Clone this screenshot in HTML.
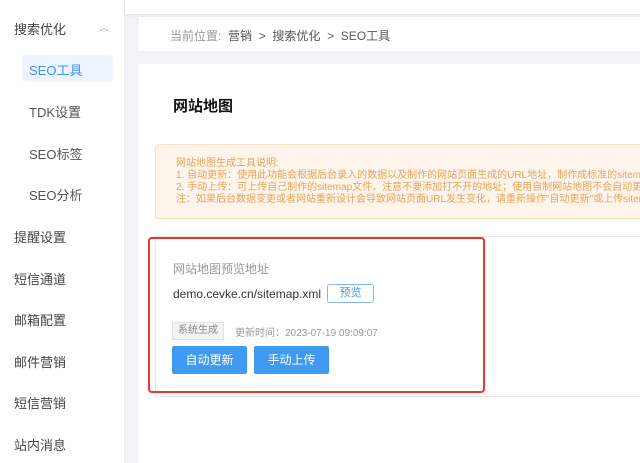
<!DOCTYPE html>
<html><head><meta charset="utf-8"><style>
*{margin:0;padding:0;box-sizing:border-box}
body{width:640px;height:463px;overflow:hidden;background:#f2f3f5;font-family:"Liberation Sans","Noto Sans CJK SC",sans-serif;position:relative}
.top{position:absolute;left:0;top:0;width:640px;height:14px;background:#fff;box-shadow:0 2px 5px rgba(0,0,0,.06)}
.side{position:absolute;left:0;top:0;width:125px;height:463px;background:#fff;border-right:1px solid #eceef1}
.it{position:absolute;font-size:13px;color:#444}
.sub{left:29px;color:#555}
.act{position:absolute;left:22px;top:55px;width:91px;height:27px;background:#edf4fe;border-radius:4px}
.bc{position:absolute;left:139px;top:17px;width:501px;height:34px;background:#fff;font-size:12px;color:#999;padding:10px 0 0 31px}
.bc b{font-weight:normal;color:#555}
.main{position:absolute;left:139px;top:64px;width:501px;height:399px;background:#fff}
h1{position:absolute;left:173px;top:95px;font-size:15px;font-weight:bold;color:#111}
.note{position:absolute;left:155px;top:144px;width:490px;height:75px;background:#fdf5eb;border:1px solid #f8e2c6;border-radius:3px;font-size:10px;line-height:12px;color:#e8a35a;padding:13px 0 0 20px;white-space:nowrap;overflow:hidden}
.card{position:absolute;left:155px;top:236px;width:490px;height:161px;border:1px solid #e3e6ea}
.red{position:absolute;left:148px;top:237px;width:337px;height:156px;border:2px solid #f2312b;border-radius:4px}
.t{position:absolute;font-size:12px}
.btn{position:absolute;top:346px;height:28px;width:75px;background:#3e9af2;color:#fff;font-size:12px;text-align:center;line-height:28px;border-radius:2px}
</style></head><body>
<div class="side">
<div class="act"></div>
<div class="it" style="left:14px;top:19px">搜索优化</div>
<div class="it" style="left:99px;top:19px;color:#aaa;font-size:10px">︿</div>
<div class="it sub" style="top:60px;color:#3e94f0">SEO工具</div>
<div class="it sub" style="top:102px">TDK设置</div>
<div class="it sub" style="top:144px">SEO标签</div>
<div class="it sub" style="top:185px">SEO分析</div>
<div class="it" style="left:14px;top:227px">提醒设置</div>
<div class="it" style="left:14px;top:269px">短信通道</div>
<div class="it" style="left:14px;top:310px">邮箱配置</div>
<div class="it" style="left:14px;top:352px">邮件营销</div>
<div class="it" style="left:14px;top:393px">短信营销</div>
<div class="it" style="left:14px;top:435px">站内消息</div>
</div>
<div class="top" style="left:125px;width:515px"></div>
<div class="bc">当前位置:&nbsp; <b>营销</b> &nbsp;<b>&gt;</b>&nbsp; <b>搜索优化</b> &nbsp;<b>&gt;</b>&nbsp; <b>SEO工具</b></div>
<div class="main"></div>
<h1>网站地图</h1>
<div class="note">网站地图生成工具说明:<br>1. 自动更新：使用此功能会根据后台录入的数据以及制作的网站页面生成的URL地址，制作成标准的sitemap<br>2. 手动上传：可上传自己制作的sitemap文件，注意不要添加打不开的地址；使用自制网站地图不会自动更新<br>注：如果后台数据变更或者网站重新设计会导致网站页面URL发生变化，请重新操作"自动更新"或上传sitemap</div>
<div class="card"></div>
<div class="red"></div>
<div class="t" style="left:173px;top:260px;color:#999">网站地图预览地址</div>
<div class="t" style="left:173px;top:287px;color:#333">demo.cevke.cn/sitemap.xml</div>
<div class="t" style="left:327px;top:284px;width:47px;height:19px;border:1px solid #7fb8f3;border-radius:3px;color:#4a9cf0;font-size:11px;text-align:center;line-height:17px">预览</div>
<div class="t" style="left:172px;top:322px;width:52px;height:18px;background:#f3f3f3;border:1px solid #e2e2e2;font-size:10px;color:#888;text-align:center;line-height:16px">系统生成</div>
<div class="t" style="left:235px;top:324px;font-size:10px;color:#999">更新时间：2023-07-19 09:09:07</div>
<div class="btn" style="left:172px">自动更新</div>
<div class="btn" style="left:254px">手动上传</div>
</body></html>
